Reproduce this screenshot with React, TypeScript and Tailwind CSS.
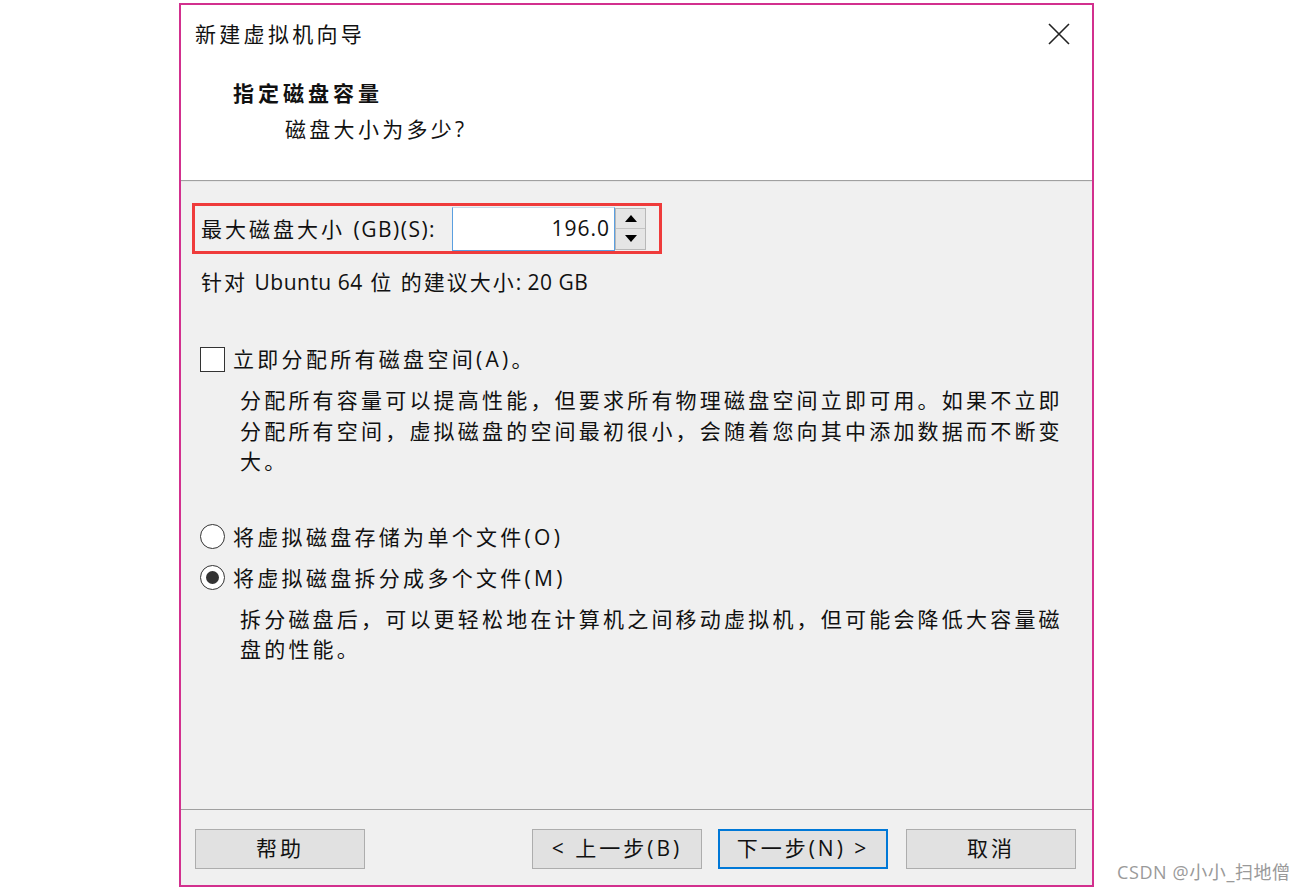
import React from "react";

const F = { fontFamily: '"Open Sans", "Noto Sans CJK SC", sans-serif' };

function Btn({ children, primary }: { children: React.ReactNode; primary?: boolean }) {
  return (
    <div
      className={
        "flex h-[40px] w-[170px] items-center justify-center bg-[#e1e1e1] text-[21px] tracking-[3px] text-[#111] " +
        (primary ? "border-2 border-[#0078d7]" : "border border-[#adadad]")
      }
    >
      {children}
    </div>
  );
}

export default function App() {
  return (
    <div className="flex min-h-[891px] w-[1310px] items-end bg-white" style={F}>
      <div className="mb-[4px] ml-[179px] flex h-[884px] w-[915px] flex-col border-2 border-[#d2308e]">
        {/* header */}
        <div className="h-[175px] bg-white">
          <div className="flex items-center justify-between pl-[14px] pr-[22px] pt-[13px]">
            <div className="h-[32px] text-[21px] leading-[32px] tracking-[3.3px] text-[#111]">新建虚拟机向导</div>
            <svg width="22" height="22" viewBox="0 0 22 22">
              <path d="M1 1 L21 21 M21 1 L1 21" stroke="#222" strokeWidth="1.6" fill="none" />
            </svg>
          </div>
          <div className="mt-[27px] pl-[52px] text-[21px] font-bold leading-[32px] tracking-[4px] text-[#111]">指定磁盘容量</div>
          <div className="mt-[4px] pl-[104px] text-[21px] leading-[32px] tracking-[3.3px] text-[#111]">磁盘大小为多少?</div>
        </div>
        <div className="h-[1px] bg-[#a0a0a0]" />
        <div className="h-[1px] bg-[#e6e6e6]" />
        {/* body */}
        <div className="flex-1 bg-[#f0f0f0] pl-[11px] pt-[21px] text-[21px] text-[#111]">
          <div className="flex h-[51px] w-[470px] items-center border-[3px] border-[#ef3b3b]">
            <div className="w-[257px] pl-[6px] leading-[30px] tracking-[3px]">
              最大磁盘大小 <span className="tracking-[1.5px]">(GB)(S):</span>
            </div>
            <div className="flex h-[44px] w-[163px] items-center justify-end border border-[#5a9fe0] border-t-[#c8d8ea] bg-white pr-[4px] tracking-[1px]">
              196.0
            </div>
            <div className="flex h-[42px] w-[31px] flex-col border border-[#b8b8b8] bg-[#f0f0f0]">
              <div className="flex flex-1 items-center justify-center border-b border-[#c4c4c4] bg-[#e5e5e5]">
                <svg width="12" height="7" viewBox="0 0 12 7"><path d="M6 0 L12 7 L0 7 Z" fill="#000" /></svg>
              </div>
              <div className="flex flex-1 items-center justify-center bg-[#e5e5e5]">
                <svg width="12" height="7" viewBox="0 0 12 7"><path d="M0 0 L12 0 L6 7 Z" fill="#000" /></svg>
              </div>
            </div>
          </div>
          <div className="mt-[13px] pl-[9px] leading-[30px] tracking-[2px]">
            针对 <span className="tracking-[0.5px]">Ubuntu 64</span> 位 的建议大小<span className="tracking-[0.5px]">: 20 GB</span>
          </div>

          <div className="mt-[47px] flex h-[30px] items-center pl-[8px]">
            <div className="h-[25px] w-[25px] border border-[#333] bg-white" />
            <div className="ml-[8px] leading-[30px] tracking-[3.3px]">立即分配所有磁盘空间(A)。</div>
          </div>
          <div className="mt-[11px] w-[878px] pl-[48px] leading-[30.5px] tracking-[3.2px]">
            分配所有容量可以提高性能，但要求所有物理磁盘空间立即可用。如果不立即分配所有空间，虚拟磁盘的空间最初很小，会随着您向其中添加数据而不断变大。
          </div>

          <div className="mt-[45px] flex h-[30px] items-center pl-[8px]">
            <div className="h-[25px] w-[25px] rounded-full border border-[#333] bg-white" />
            <div className="ml-[8px] leading-[30px] tracking-[3.3px]">将虚拟磁盘存储为单个文件(O)</div>
          </div>
          <div className="mt-[11px] flex h-[30px] items-center pl-[8px]">
            <div className="flex h-[25px] w-[25px] items-center justify-center rounded-full border border-[#333] bg-white">
              <div className="h-[13px] w-[13px] rounded-full bg-[#333]" />
            </div>
            <div className="ml-[8px] leading-[30px] tracking-[3.3px]">将虚拟磁盘拆分成多个文件(M)</div>
          </div>
          <div className="mt-[11px] w-[878px] pl-[48px] leading-[30.5px] tracking-[3.2px]">
            拆分磁盘后，可以更轻松地在计算机之间移动虚拟机，但可能会降低大容量磁盘的性能。
          </div>
        </div>
        {/* footer */}
        <div className="h-[1px] bg-[#a0a0a0]" />
        <div className="flex h-[75px] bg-[#f0f0f0] pl-[14px] pr-[16px] pt-[19px]">
          <Btn>帮助</Btn>
          <div className="ml-auto flex">
            <Btn>&lt; 上一步(B)</Btn>
            <div className="ml-[16px]">
              <Btn primary>下一步(N) &gt;</Btn>
            </div>
            <div className="ml-[18px]">
              <Btn>取消</Btn>
            </div>
          </div>
        </div>
      </div>
      <div className="mb-[7px] ml-[23px] text-[18px] leading-[24px] tracking-[0.6px] text-[#9a9a9a]">CSDN @小小_扫地僧</div>
    </div>
  );
}
